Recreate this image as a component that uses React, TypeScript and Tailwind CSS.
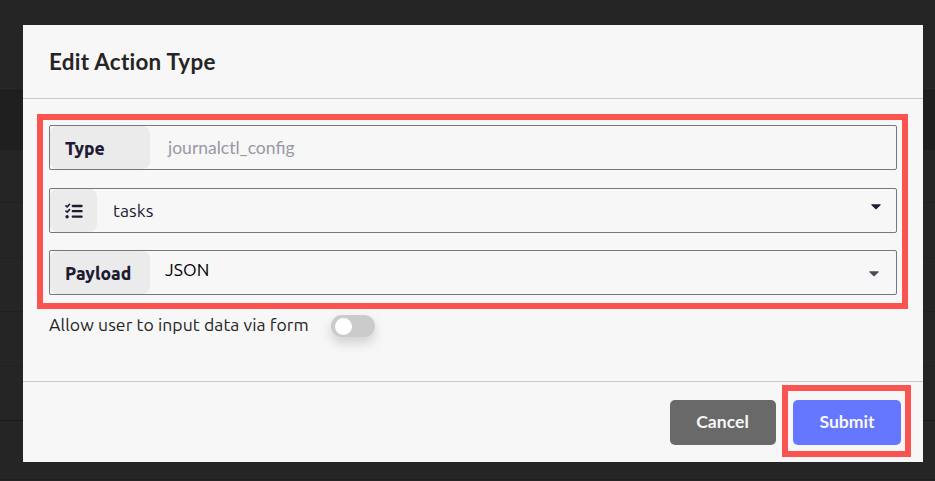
import type { ReactNode } from "react";

const ubuntu = "font-['Ubuntu','Noto_Sans',sans-serif]";
const lato = "font-['Lato',sans-serif]";

function TableBackdrop() {
  return (
    <div className="col-start-1 row-start-1 flex h-[481px] flex-col bg-[#252525]">
      <div className="h-[90px]" />
      <div className="h-[60px] border-t border-[#1a1a1a] bg-[#1f1f1f]" />
      <div className="h-[53px] border-b border-[#202020]" />
      <div className="h-[55px] border-b border-[#202020]" />
      <div className="h-[54px] border-b border-[#202020]" />
      <div className="h-[55px] border-b border-[#202020]" />
      <div className="h-[54px] border-b border-[#1a1a1a]" />
      <div className="h-[59px] border-b border-[#202020]" />
    </div>
  );
}

function Field({ label, children }: { label: ReactNode; children: ReactNode }) {
  return (
    <div className="flex h-[45px] shrink-0 rounded-[2px] border border-[#777681]">
      {label}
      {children}
    </div>
  );
}

function FieldLabel({ children }: { children: string }) {
  return (
    <div className={`${ubuntu} flex w-[100px] items-center rounded-lg bg-[#ebebeb] pt-[4px] pl-[15px] text-[17.5px] font-extrabold text-[#1e1b33]`}>
      {children}
    </div>
  );
}

function Caret({ className }: { className: string }) {
  return (
    <svg viewBox="0 0 10 6" className={"h-[6px] w-[10px] " + className} fill="currentColor">
      <path d="M1 0.2H9C9.7 0.2 9.9 0.8 9.5 1.2L5.6 4.9Q5 5.5 4.4 4.9L0.5 1.2C0.1 0.8 0.3 0.2 1 0.2Z" />
    </svg>
  );
}

function TasksIcon() {
  return (
    <svg viewBox="0 0 18 16" className="h-4 w-[18px]" fill="none" stroke="#1e1b33" strokeLinecap="round" strokeLinejoin="round">
      <path d="M0.9 2.8L2.2 3.9L4.5 1.3M0.9 8L2.2 9.1L4.5 6.6" strokeWidth="1.6" />
      <path d="M7.8 3H16.6M7.8 8.2H16.6M7.8 13.7H16.6" strokeWidth="2.3" />
      <circle cx="2.1" cy="13.7" r="1.7" fill="#1e1b33" stroke="none" />
    </svg>
  );
}

export default function App() {
  return (
    <div className="grid h-[481px] w-[935px] overflow-hidden">
      <TableBackdrop />
      <div className="relative col-start-1 row-start-1 mt-[25px] ml-[23px] flex h-[437px] w-[900px] flex-col bg-[#f7f7f7]">
        <header className="h-[74px] border-b border-[#c8c8c8] px-[26px] pt-[22px]">
          <h1 className={`${lato} text-[22.4px] leading-[30px] font-bold tracking-[0.28px] text-[#252525]`}>Edit Action Type</h1>
        </header>

        <main className="flex h-[282px] flex-col pt-[15px] pl-[14px]">
          <section className="flex h-[195px] w-[871px] flex-col border-6 border-[#fb534f] pt-[5px] pr-[5px] pl-[6px]">
            <Field label={<FieldLabel>Type</FieldLabel>}>
              <span className={`${lato} pt-[10px] pl-[18px] text-[17.5px] leading-6 text-[#9998a3]`}>journalctl_config</span>
            </Field>
            <div className="h-[18px] shrink-0" />
            <Field
              label={
                <div className="flex w-[47px] items-center rounded-lg bg-[#ebebeb] pt-px pl-[15px]">
                  <TasksIcon />
                </div>
              }
            >
              <span className={`${ubuntu} pt-[10px] pl-[16px] text-[17.6px] leading-6 tracking-[0.07px] text-[#1e1b33]`}>tasks</span>
              <Caret className="mt-[15px] mr-[15px] ml-auto text-[#1e1b33]" />
            </Field>
            <div className="h-[17px] shrink-0" />
            <Field label={<FieldLabel>Payload</FieldLabel>}>
              <span className={`${ubuntu} pt-[7px] pl-[15px] text-[17.6px] leading-6 tracking-[0.1px] text-black`}>JSON</span>
              <Caret className="mt-[20px] mr-[17px] ml-auto text-[#4b495c]" />
            </Field>
          </section>

          <div className="flex pl-[12px]">
            <span className={`${ubuntu} mt-[4px] w-[282px] text-[17.6px] leading-6 tracking-[0.07px] whitespace-nowrap text-[#252525]`}>
              Allow user to input data via form
            </span>
            <button className="mt-[6px] flex h-[22px] w-[44px] items-center rounded-full bg-[#cbcbcb] pl-1 shadow-[0_6px_12px_rgba(0,0,0,0.16)]">
              <span className="size-[17px] rounded-full bg-white" />
            </button>
          </div>
        </main>

        <footer className="flex h-[81px] border-t border-[#c8c8c8] pt-[3px] pl-[647px]">
          <button className={`${lato} mt-[15px] h-[45px] w-[106px] rounded-[5px] bg-[#696969] pr-px text-[17.6px] font-bold text-[#f7f7f7]`}>
            Cancel
          </button>
          <div className="ml-[6px] h-[72px] w-[129px] border-6 border-[#fb534f] pt-[9px] pl-[5px]">
            <button className={`${lato} h-[45px] w-[108px] rounded-[5px] bg-[#6576ff] text-[17.6px] font-bold text-[#f7f7f7]`}>
              Submit
            </button>
          </div>
        </footer>
      </div>
    </div>
  );
}
